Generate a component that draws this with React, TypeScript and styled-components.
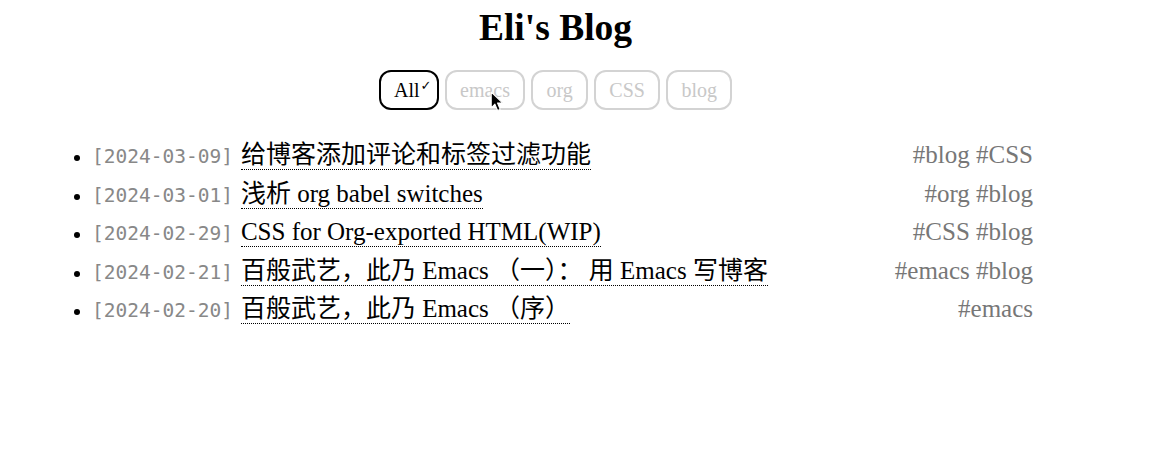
import React from "react";
import styled, { createGlobalStyle } from "styled-components";

const Global = createGlobalStyle`
  html, body { margin: 0; padding: 0; background: #fff; }
  body { font-family: "Liberation Serif", "Noto Sans CJK SC", serif; color: #000; }
`;

const Page = styled.div`
  position: relative;
  width: 1007px;
  margin-left: 52px;
  padding-top: 7px;
`;

const Title = styled.h1`
  margin: 0;
  text-align: center;
  font-size: 37.5px;
  font-weight: bold;
  line-height: 41.5px;
`;

const Filters = styled.div`
  display: flex;
  justify-content: center;
  gap: 6.5px;
  margin-top: 21.5px;
`;

const FilterButton = styled.button<{ $active?: boolean }>`
  display: inline-flex;
  align-items: center;
  height: 40px;
  box-sizing: border-box;
  padding: ${(p) => (p.$active ? "0 5px 0 13px" : "0 13px")};
  border: 2px solid ${(p) => (p.$active ? "#000" : "#d3d3d3")};
  border-radius: 12px;
  background: #fff;
  color: ${(p) => (p.$active ? "#000" : "#c8c8c8")};
  font-family: "Liberation Serif", serif;
  font-size: 20px;
  cursor: pointer;
`;

const Check = styled.span`
  font-family: "DejaVu Sans", sans-serif;
  font-size: 13px;
  align-self: flex-start;
  margin-top: 6px;
  margin-left: 1px;
`;

const List = styled.ul`
  margin: 31px 0 0;
  padding: 0 26px 0 40px;
  font-size: 19.5px;
`;

const Item = styled.li`
  height: 38.5px;
`;

const Row = styled.div`
  display: flex;
  align-items: baseline;
`;

const DateText = styled.span`
  font-family: "DejaVu Sans Mono", monospace;
  font-size: 19.5px;
  color: #888;
  margin-right: 8px;
`;

const PostLink = styled.a`
  font-family: "Liberation Serif", "Noto Sans CJK SC", serif;
  font-size: 25px;
  line-height: 28px;
  color: #000;
  text-decoration: none;
  border-bottom: 1px dotted #000;
`;

const Tags = styled.span`
  margin-left: auto;
  font-family: "Liberation Serif", serif;
  font-size: 25px;
  color: #777;
`;

const Cursor = styled.svg`
  position: absolute;
  left: 438px;
  top: 91px;
  width: 14px;
  height: 21px;
`;

const posts = [
  { date: "2024-03-09", title: "给博客添加评论和标签过滤功能", tags: "#blog #CSS" },
  { date: "2024-03-01", title: "浅析 org babel switches", tags: "#org #blog" },
  { date: "2024-02-29", title: "CSS for Org-exported HTML(WIP)", tags: "#CSS #blog" },
  { date: "2024-02-21", title: "百般武艺，此乃 Emacs （一）： 用 Emacs 写博客", tags: "#emacs #blog" },
  { date: "2024-02-20", title: "百般武艺，此乃 Emacs （序）", tags: "#emacs" },
];

export default function App() {
  return (
    <>
      <Global />
      <Page>
        <Title>Eli's Blog</Title>
        <Filters>
          <FilterButton $active>
            All<Check>✓</Check>
          </FilterButton>
          <FilterButton>emacs</FilterButton>
          <FilterButton>org</FilterButton>
          <FilterButton>CSS</FilterButton>
          <FilterButton>blog</FilterButton>
        </Filters>
        <List>
          {posts.map((p) => (
            <Item key={p.date}>
              <Row>
                <DateText>[{p.date}]</DateText>
                <PostLink href="#">{p.title}</PostLink>
                <Tags>{p.tags}</Tags>
              </Row>
            </Item>
          ))}
        </List>
        <Cursor viewBox="0 0 13 20">
          <path d="M1 1 L1 16 L4.5 12.5 L7 18.5 L9.5 17.5 L7 11.5 L12 11.5 Z" fill="#000" stroke="#fff" strokeWidth="1" strokeLinejoin="round" />
        </Cursor>
      </Page>
    </>
  );
}
